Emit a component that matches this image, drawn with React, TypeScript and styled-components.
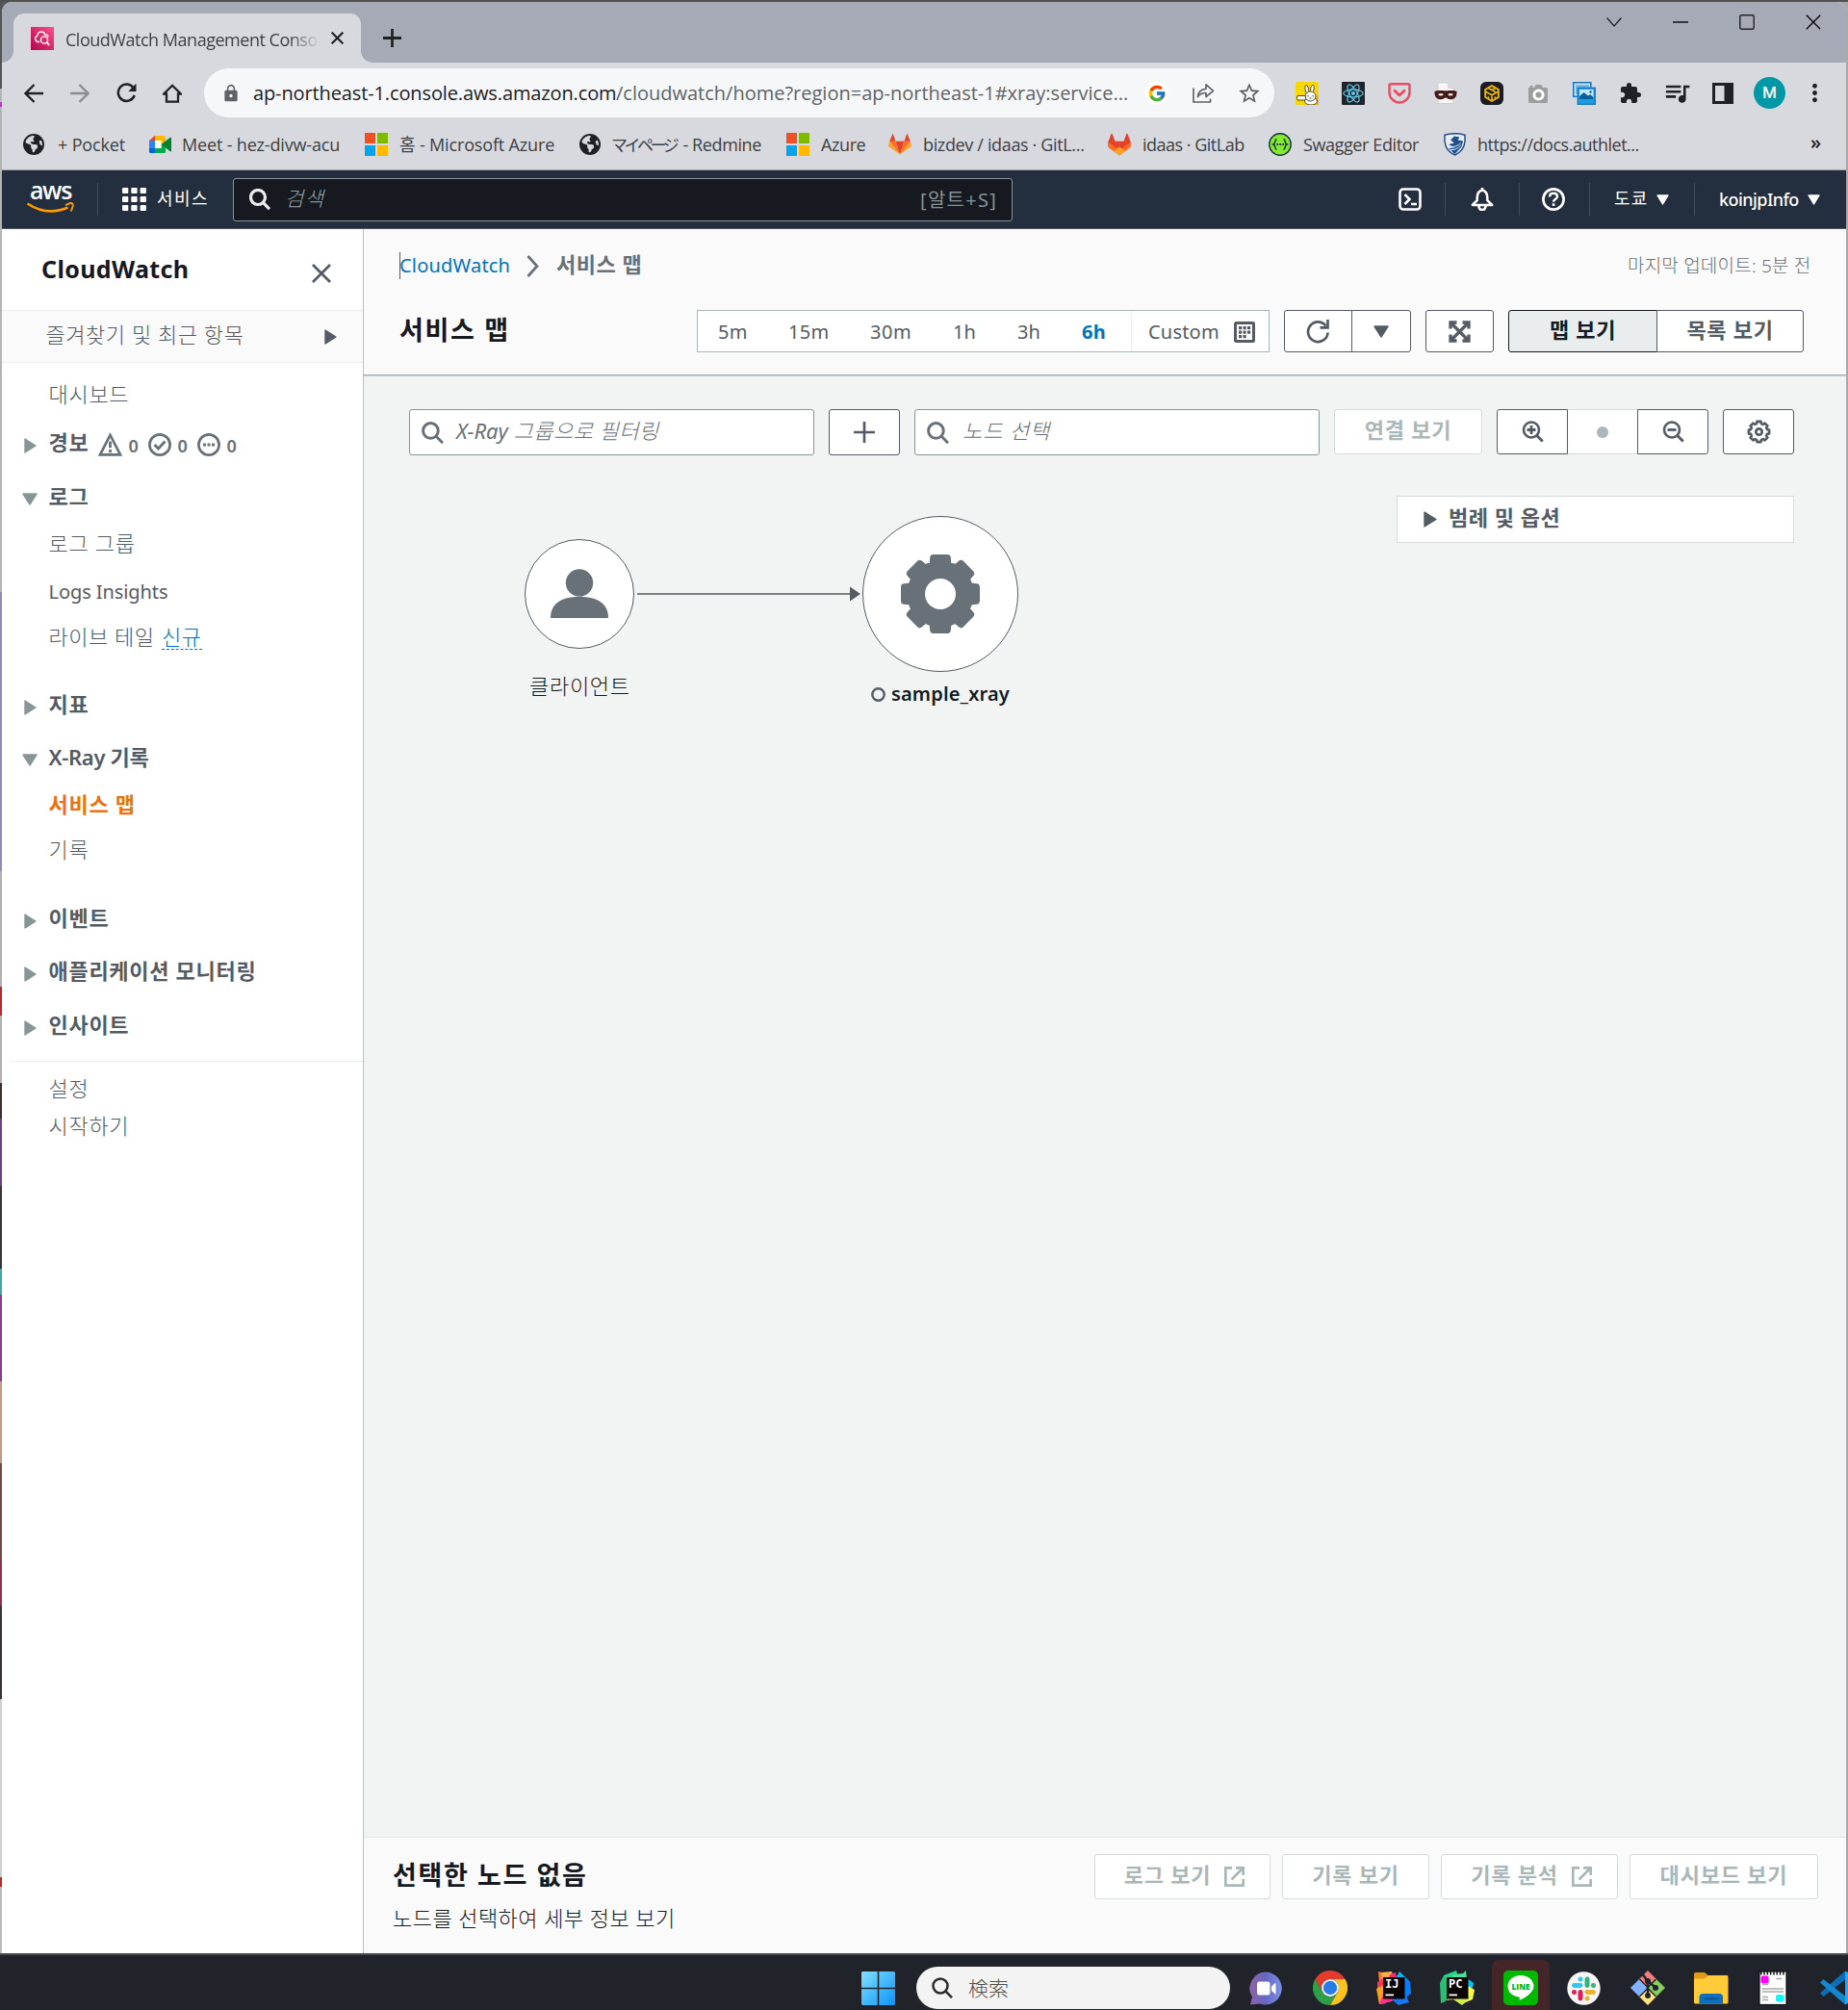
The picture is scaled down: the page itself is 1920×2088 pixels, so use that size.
import React from "react";
import styled, { createGlobalStyle, css } from "styled-components";
import { FcGoogle } from "react-icons/fc";
import { MdExtension, MdLock, MdMoreVert, MdQueueMusic, MdStarBorder } from "react-icons/md";
import { FaEarthAmericas } from "react-icons/fa6";

const GlobalStyle = createGlobalStyle`
  * { box-sizing: border-box; }
  body {
    margin: 0;
    width: 1920px;
    height: 2088px;
    overflow: hidden;
    background: #202329;
    font-family: "Noto Sans", "Noto Sans CJK KR", sans-serif;
  }
  svg { display: block; flex: none; }
`;

/* ---------- text ---------- */

interface TextProps {
  $w?: number;
  $s?: number;
  $c?: string;
  $b?: number;
  $ls?: number;
  $ml?: number;
  $mt?: number;
  $italic?: boolean;
  $ui?: boolean;
}

const Text = styled.span<TextProps>`
  flex: none;
  white-space: pre;
  line-height: 28px;
  width: ${(p) => (p.$w ? `${p.$w}px` : "auto")};
  font-size: ${(p) => p.$s ?? 22}px;
  font-weight: ${(p) => p.$b ?? 400};
  font-style: ${(p) => (p.$italic ? "italic" : "normal")};
  letter-spacing: ${(p) => p.$ls ?? 0}px;
  color: ${(p) => p.$c ?? "#545b64"};
  margin-left: ${(p) => p.$ml ?? 0}px;
  margin-top: ${(p) => p.$mt ?? 0}px;
  ${(p) =>
    p.$ui &&
    css`
      font-family: "Open Sans", "Noto Sans CJK KR", "Noto Sans CJK JP", sans-serif;
    `}
`;

const Kana = styled.span`
  font-size: 17px;
  letter-spacing: -3.5px;
  margin-right: 3px;
`;

const Latin = styled.span`
  font-weight: 400;
  letter-spacing: 0;
`;

const Slot = styled.span<{ $ml?: number; $mt?: number; $c?: string; $w?: number }>`
  display: flex;
  flex: none;
  justify-content: center;
  width: ${(p) => (p.$w ? `${p.$w}px` : "auto")};
  margin-left: ${(p) => p.$ml ?? 0}px;
  margin-top: ${(p) => p.$mt ?? 0}px;
  color: ${(p) => p.$c ?? "#202124"};
`;

/* ---------- window frame ---------- */

const Desktop = styled.div`
  width: 1920px;
  height: 2088px;
  display: flex;
  flex-direction: column;
`;

const Frame = styled.div`
  height: 2029px;
  padding: 2px 2px 0 2px;
  background:
    linear-gradient(#505050, #505050) top / 100% 2px no-repeat,
    linear-gradient(#a9a9ab, #a9a9ab) right / 12px 100% no-repeat,
    linear-gradient(
      #555 0 92px, #b5b5b5 92px 106px, #b63cc8 106px 111px, #b4b4b4 111px 615px,
      #8f8cb8 615px 905px, #b0b0b0 905px 1025px, #b8282f 1025px 1055px, #b5b0b0 1055px 1125px,
      #3c302e 1125px 1162px, #6d4480 1162px 1232px, #3a3536 1232px 1318px, #3fa7a3 1318px 1345px,
      #8a3c8c 1345px 1435px, #c09a83 1435px 1520px, #6f4c48 1520px 1620px, #8e3350 1620px 1668px,
      #3a3436 1668px 1765px, #cfcfcf 1765px 1950px, #b8282f 1950px 1960px, #bbb 1960px 2029px
    );
`;

const Window = styled.div`
  height: 2027px;
  display: flex;
  flex-direction: column;
  border-radius: 10px 10px 0 0;
  overflow: hidden;
  background: #d8d9df;
`;

const TabStrip = styled.div`
  height: 63px;
  flex: none;
  display: flex;
  padding: 12px 0 0 0;
  background: #a6aab6;
`;

const TabFoot = styled.span<{ $right?: boolean }>`
  width: 12px;
  height: 12px;
  align-self: flex-end;
  background: radial-gradient(circle at ${(p) => (p.$right ? "100%" : "0")} 0, #a6aab6 11.5px, #d8d9df 12.2px);
`;

const Tab = styled.div`
  width: 361px;
  display: flex;
  align-items: center;
  padding-left: 18px;
  background: #d8d9df;
  border-radius: 11px 11px 0 0;
`;

const TabTitle = styled(Text)`
  overflow: hidden;
  mask-image: linear-gradient(90deg, #000 88%, transparent);
`;

const WindowButtons = styled.div`
  margin-left: auto;
  padding: 0 26px 0 0;
  height: 18px;
  display: flex;
  align-items: center;
  gap: 53px;
`;

const Toolbar = styled.div`
  height: 63px;
  flex: none;
  display: flex;
  align-items: center;
  padding-left: 23px;
`;

const AddressBar = styled.div`
  width: 1112px;
  height: 51px;
  margin-left: 23px;
  padding-left: 21px;
  display: flex;
  align-items: center;
  border-radius: 26px;
  background: #f5f7f9;
`;

const Badge = styled.span`
  width: 24px;
  height: 24px;
  margin-left: 19px;
  display: flex;
  align-items: center;
  justify-content: center;
  border-radius: 50%;
  background: #fff;
`;

const Extensions = styled.div`
  display: flex;
  align-items: center;
  gap: 24px;
  margin-left: 22px;
`;

const Avatar = styled.span`
  width: 33px;
  height: 33px;
  margin-left: 20px;
  border-radius: 50%;
  background: #0097a7;
  color: #fff;
  font: 500 17px/33px Roboto, sans-serif;
  text-align: center;
`;

const Bookmarks = styled.div`
  height: 49px;
  flex: none;
  display: flex;
  align-items: center;
  padding: 0 0 5px 22px;
  border-bottom: 1px solid #a3a4a8;
`;

/* ---------- AWS navigation ---------- */

const AwsNav = styled.nav`
  height: 61px;
  flex: none;
  display: flex;
  align-items: center;
  padding-left: 25px;
  background: #232f3e;
  border-bottom: 1px solid #4c5561;
`;

const AwsLogo = styled.div`
  width: 50px;
  height: 34px;
  display: flex;
  flex-direction: column;
  align-items: center;
`;

const AwsWord = styled.span`
  height: 20px;
  margin-left: 1px;
  font: 600 25px/14px "Open Sans", sans-serif;
  letter-spacing: -1.3px;
  color: #fff;
`;

const Divider = styled.span<{ $ml: number }>`
  width: 1px;
  height: 34px;
  flex: none;
  margin-left: ${(p) => p.$ml}px;
  background: #414d5c;
`;

const GlobalSearch = styled.div`
  width: 810px;
  height: 45px;
  margin-left: 25px;
  padding-left: 16px;
  display: flex;
  align-items: center;
  border: 1px solid #879596;
  border-radius: 3px;
  background: #16191f;
`;

/* ---------- page body ---------- */

const Body = styled.div`
  flex: 1;
  min-height: 0;
  display: flex;
`;

const Sidebar = styled.aside`
  width: 376px;
  flex: none;
  background: #fff;
  border-right: 1px solid #b7c1c1;
`;

const SideHeader = styled.div`
  height: 84px;
  display: flex;
  align-items: center;
  padding-left: 41px;
`;

const Favorites = styled.div`
  height: 55px;
  display: flex;
  align-items: center;
  padding-left: 45px;
  background: #fafafa;
  border: solid #eaeded;
  border-width: 1px 0;
`;

const SideRow = styled.div<{ $gap: number }>`
  height: 40px;
  margin-top: ${(p) => p.$gap}px;
  padding-left: 20px;
  display: flex;
  align-items: center;
`;

const Twisty = styled.span`
  width: 28px;
  flex: none;
  display: flex;
  align-items: center;
  padding-top: 3px;
`;

const NewTag = styled(Text)`
  border-bottom: 1px dashed #0073bb;
  line-height: 26px;
`;

const SideRule = styled.hr`
  height: 1px;
  margin: 16px 0 0 8px;
  border: 0;
  background: #eaeded;
`;

const Main = styled.main`
  flex: 1;
  display: flex;
  flex-direction: column;
  background: #f2f4f3;
`;

const PageHeader = styled.header`
  height: 153px;
  flex: none;
  background: #fafafa;
  border-bottom: 1px solid #c9d0d1;
  box-shadow: inset 0 -1px 0 #a6b0b2;
`;

const Crumbs = styled.div`
  height: 40px;
  margin-top: 17px;
  padding-left: 37px;
  display: flex;
  align-items: center;
`;

const CrumbLink = styled(Text)`
  border-left: 1px solid #0073bb;
  text-indent: -1px;
`;

const TitleRow = styled.div`
  height: 44px;
  margin-top: 27px;
  padding-left: 37px;
  display: flex;
  align-items: center;
`;

const Ranges = styled.div`
  width: 595px;
  height: 44px;
  margin-left: 195px;
  padding: 2px 0 0 21px;
  display: flex;
  align-items: center;
  background: #fff;
  border: 1px solid #aab7b8;
`;

const RangeDivider = styled.span`
  width: 1px;
  height: 42px;
  margin: -2px 0 0 25px;
  background: #eaeded;
`;

type Tone = "normal" | "active" | "disabled";

const tones: Record<Tone, string> = {
  normal: "#545b64",
  active: "#16191f",
  disabled: "#d5dbdb",
};

const Button = styled.button<{ $w: number; $h?: number; $ml?: number; $tone?: Tone; $r?: string }>`
  width: ${(p) => p.$w}px;
  height: ${(p) => p.$h ?? 44}px;
  flex: none;
  margin: 0 0 0 ${(p) => p.$ml ?? 0}px;
  padding: 0;
  display: flex;
  align-items: center;
  justify-content: center;
  font-family: inherit;
  color: #545b64;
  background: ${(p) => (p.$tone === "active" ? "#eaeded" : "#fff")};
  border: 1px solid ${(p) => tones[p.$tone ?? "normal"]};
  border-radius: ${(p) => p.$r ?? "3px"};
`;

const DotCell = styled.span`
  width: 72px;
  height: 47px;
  display: flex;
  align-items: center;
  justify-content: center;
  background: #fff;
  border: solid #d5dbdb;
  border-width: 1px 0;
`;

const Canvas = styled.section`
  position: relative;
  height: 1517px;
  flex: none;
`;

const MapTools = styled.div`
  display: flex;
  padding: 34px 0 0 47px;
`;

const Field = styled.div<{ $ml?: number }>`
  width: 421px;
  height: 48px;
  flex: none;
  margin-left: ${(p) => p.$ml ?? 0}px;
  padding-left: 12px;
  display: flex;
  align-items: center;
  background: #fff;
  border: 1px solid #879596;
  border-radius: 3px;
`;

const Legend = styled.div`
  width: 413px;
  height: 49px;
  margin: 42px 0 0 1073px;
  padding-left: 27px;
  display: flex;
  align-items: center;
  background: #fff;
  border: 1px solid #d5dbdb;
`;

const MapNode = styled.div<{ $x: number; $y: number; $d: number }>`
  position: absolute;
  left: ${(p) => p.$x - p.$d / 2}px;
  top: ${(p) => p.$y - p.$d / 2}px;
  width: ${(p) => p.$d}px;
  height: ${(p) => p.$d}px;
  display: flex;
  align-items: center;
  justify-content: center;
  border: 1px solid #545b64;
  border-radius: 50%;
  background: #fff;
`;

const MapEdge = styled.svg`
  position: absolute;
  left: 284px;
  top: 218px;
`;

const NodeLabel = styled.div<{ $x: number; $y: number }>`
  position: absolute;
  left: ${(p) => p.$x}px;
  top: ${(p) => p.$y}px;
  display: flex;
  align-items: center;
`;

const DetailPanel = styled.section`
  flex: 1;
  display: flex;
  justify-content: space-between;
  padding: 17px 29px 0 30px;
  background: #fafafa;
  border-top: 1px solid #e3e8e8;
`;

const DetailText = styled.div`
  display: flex;
  flex-direction: column;
`;

const DetailActions = styled.div`
  display: flex;
  gap: 12px;
`;

/* ---------- taskbar ---------- */

const Taskbar = styled.footer`
  height: 59px;
  flex: none;
  display: flex;
  align-items: center;
  padding: 11px 0 0 895px;
  overflow: hidden;
  background: #202329;
  border-top: 2px solid #494c4e;
`;

const TaskSearch = styled.div`
  width: 326px;
  height: 44px;
  flex: none;
  margin-left: 22px;
  padding-left: 16px;
  display: flex;
  align-items: center;
  border-radius: 22px;
  background: #f3f3f3;
`;

const LineCell = styled.span`
  width: 60px;
  height: 64px;
  flex: none;
  margin: 6px 0 0 18px;
  display: flex;
  justify-content: center;
  padding-top: 11px;
  border-radius: 7px;
  background: #452628;
`;

/* ---------- icons ---------- */

const stroke = (w: number, c = "currentColor") => ({
  fill: "none",
  stroke: c,
  strokeWidth: w,
});

const CloudWatchIcon = () => (
  <svg width="24" height="24" viewBox="0 0 24 24">
    <defs>
      <linearGradient id="cw" x1="0" y1="1" x2="1" y2="0">
        <stop offset="0" stopColor="#b0084d" />
        <stop offset="1" stopColor="#ff4f8b" />
      </linearGradient>
    </defs>
    <rect width="24" height="24" fill="url(#cw)" />
    <path d="M9 15.500H7.500A3.300 3.300 0 0 1 6.800 9.200C6.900 6.500 9 5 11 5c2 0 3.300 1.200 3.900 3 1.600-.3 3 .5 3.100 2.500" {...stroke(1.3, "#fff")} />
    <circle cx="14" cy="13.500" r="3.600" {...stroke(1.4, "#fff")} />
    <path d="m16.600 16.200 2.600 2.800" {...stroke(1.8, "#fff")} />
  </svg>
);

const Cross = ({ size, w }: { size: number; w: number }) => (
  <svg width={size} height={size} viewBox="0 0 20 20">
    <path d="M1 1 19 19M19 1 1 19" {...stroke(w)} />
  </svg>
);

const Plus = ({ size, w }: { size: number; w: number }) => (
  <svg width={size} height={size} viewBox="0 0 20 20">
    <path d="M10 0V20M0 10H20" {...stroke(w)} />
  </svg>
);

const ArrowLeft = ({ flip }: { flip?: boolean }) => (
  <svg width="20" height="20" viewBox="0 0 20 20" transform={flip ? "scale(-1 1)" : undefined}>
    <path d="M20 10H2M10.500 1 1.500 10l9 9" {...stroke(2.300)} />
  </svg>
);

const ReloadIcon = () => (
  <svg width="21" height="21" viewBox="0 0 21 21">
    <path d="M17.800 5.500A8.700 8.700 0 1 0 18.700 13" {...stroke(2.500)} />
    <path d="M20.500.8V9H12.300z" fill="currentColor" />
  </svg>
);

const HomeIcon = () => (
  <svg width="20" height="20" viewBox="0 0 20 20">
    <path d="M1.200 10.500 10 1.800l8.800 8.700H16V18.700H4V10.500z" {...stroke(2.300)} />
  </svg>
);

const ShareIcon = () => (
  <svg width="23" height="21" viewBox="0 0 23 21">
    <path d="M1 5.500V20H18.500V16.500" {...stroke(1.700)} />
    <path d="M5.500 14.500C6 9.500 9 6.500 14 6.300V1.800L21.500 8.300 14 14.500V10.500C10 10.500 7.500 11.500 5.500 14.500z" {...stroke(1.700)} strokeLinejoin="round" />
  </svg>
);

const BunnyIcon = () => (
  <svg width="24" height="24" viewBox="0 0 24 24">
    <rect width="24" height="24" rx="1.500" fill="#f6d800" />
    <path d="M12 24h12V13z" fill="#f5b400" />
    <g fill="#fff" stroke="#4c4427" strokeWidth="1">
      <path d="M11.500 12C9.500 8 9.500 4 11 3.500c1.800-.3 2.700 4 2.800 7.500zM15.500 11c0-4 .8-8 2.700-7.500 1.800.5 1 5-.5 8.500z" />
      <ellipse cx="16" cy="20" rx="6.500" ry="4" />
      <ellipse cx="15.500" cy="15" rx="5.500" ry="5" />
      <rect x="1.500" y="14.500" width="9" height="4.500" rx="1.500" />
    </g>
    <path d="M13 14v1.500M18 14v1.500M14.500 17h2" {...stroke(1, "#333")} />
  </svg>
);

const ReactIcon = () => (
  <svg width="24" height="24" viewBox="0 0 24 24">
    <rect width="24" height="24" rx="1" fill="#20232a" />
    <g {...stroke(1.200, "#61c9ea")}>
      {[0, 60, 120].map((a) => (
        <ellipse key={a} cx="12" cy="12" rx="10.200" ry="3.900" transform={`rotate(${a} 12 12)`} />
      ))}
    </g>
    <circle cx="12" cy="12" r="2" fill="#61c9ea" />
  </svg>
);

const PocketIcon = () => (
  <svg width="24" height="24" viewBox="0 0 24 24">
    <path d="M3 2.200H21A1.500 1.500 0 0 1 22.500 3.700V11A10.500 10.500 0 0 1 1.500 11V3.700A1.500 1.500 0 0 1 3 2.200z" {...stroke(2.400, "#ef4962")} />
    <path d="m7 9.200 5 4.800 5-4.800" {...stroke(2.700, "#ef4962")} strokeLinecap="round" strokeLinejoin="round" />
  </svg>
);

const MaskIcon = () => (
  <svg width="24" height="24" viewBox="0 0 24 24">
    <path d="M4 1h10l6 6v15.500H4z" fill="#f7f7f7" stroke="#c9c9c9" strokeWidth=".8" />
    <path d="M14 1v6h6z" fill="#d9d9d9" />
    <path d="M.5 10c3-1.500 6-.8 11.500-.8S20.500 8.500 23.500 10c.5 6-3 8.500-6.500 8.300-2.500 0-3.500-1.800-5-1.800s-2.500 1.800-5 1.800C3.500 18.500 0 16 .5 10z" fill="#43191a" />
    <ellipse cx="7" cy="13.300" rx="2.700" ry="1.300" fill="#e8e2e2" />
    <ellipse cx="17" cy="13.300" rx="2.700" ry="1.300" fill="#e8e2e2" />
  </svg>
);

const HiveIcon = () => (
  <svg width="24" height="24" viewBox="0 0 24 24">
    <rect width="24" height="24" rx="6" fill="#1b1d22" />
    <path d="M12 4 18.800 8V16L12 20 5.200 16V8z" {...stroke(1.900, "#f0b90b")} />
    <path d="M5.500 10.200 12 13.800 18.500 10.200M12 13.800V20M8.300 6.500 15.700 10.500M15.700 6.500 12 8.500M8.500 15.200v2.500M15.500 15.200v2.500" {...stroke(1.600, "#f0b90b")} />
  </svg>
);

const CameraIcon = () => (
  <svg width="24" height="24" viewBox="0 0 24 24">
    <path d="M3.500 4h3v2H8L9.500 3h6L17 6h3.500A1.500 1.500 0 0 1 22 7.500v13A1.500 1.500 0 0 1 20.500 22h-17A1.500 1.500 0 0 1 2 20.500V6h1.500z" fill="#9d9d9d" />
    <circle cx="12.500" cy="13.500" r="4.600" fill="#9d9d9d" stroke="#fff" strokeWidth="3" />
  </svg>
);

const PhotosIcon = () => (
  <svg width="24" height="24" viewBox="0 0 24 24">
    <rect x=".8" y=".8" width="18" height="14.500" fill="#d7ecfa" stroke="#2277b8" strokeWidth="1.600" />
    <rect x="3" y="3" width="14" height="10" fill="#6fb9e8" />
    <rect x="5.300" y="6.300" width="18" height="17" fill="#1f9be0" stroke="#1a7cc4" strokeWidth="1.400" />
    <rect x="7" y="8" width="14.500" height="10" fill="#c7e8fb" />
    <path d="M7 18v-3l4.500-4 4.500 3.500 2-1.500 3.500 3V18z" fill="#0e5f9e" />
    <circle cx="18.500" cy="10.500" r="1.200" fill="#0e5f9e" />
  </svg>
);

const PanelIcon = () => (
  <svg width="22" height="22" viewBox="0 0 22 22">
    <rect x="1.500" y="1.500" width="19" height="19" {...stroke(3)} />
    <rect x="12.500" y="1" width="9" height="20" fill="currentColor" />
  </svg>
);

const MeetIcon = () => (
  <svg width="24" height="20" viewBox="0 0 24 20">
    <path d="M6 1H15.500A1.500 1.500 0 0 1 17 2.500V10H12.500V6H6z" fill="#ffba00" />
    <path d="M0 6 6 .8V6z" fill="#ea4335" />
    <path d="M0 6H6V14H0z" fill="#2684fc" />
    <path d="M0 14H6V19H1.500A1.500 1.500 0 0 1 0 17.500z" fill="#0066da" />
    <path d="M6 14H12.500V10H17V17.500A1.500 1.500 0 0 1 15.500 19H6z" fill="#00ac47" />
    <path d="M12.500 10 21.500 3Q23 2 23 3.500V16.500Q23 18 21.500 17z" fill="#00832d" />
    <path d="M6 6H12.500V14H6z" fill="#fff" />
  </svg>
);

const MicrosoftIcon = () => (
  <svg width="24" height="24" viewBox="0 0 24 24">
    <path fill="#f25022" d="M0 0h11v11H0z" />
    <path fill="#7fba00" d="M13 0h11v11H13z" />
    <path fill="#00a4ef" d="M0 13h11v11H0z" />
    <path fill="#ffb900" d="M13 13h11v11H13z" />
  </svg>
);

const GitLabIcon = ({ solid }: { solid?: boolean }) =>
  solid ? (
    <svg width="24" height="24" viewBox="0 0 24 24">
      <path d="M12 23.500 1.500 15.500A5.500 5.500 0 0 1 .3 9.500L3.500 1Q4 .3 4.600 1L7.500 8.800h9L19.400 1Q20 .3 20.500 1l3.200 8.500a5.500 5.500 0 0 1-1.200 6z" fill="#e24329" />
      <path d="M12 18.500 23.700 9.600Q25 13.500 22.500 15.700L18 19z" fill="#fc6d26" />
      <path d="M12 18.500.3 9.600Q-1 13.500 1.500 15.700L6 19z" fill="#fc6d26" />
      <path d="m12 14.500 6 4.500-6 4.500L6 19z" fill="#fca326" />
    </svg>
  ) : (
    <svg width="24" height="23" viewBox="0 0 24 23">
      <path d="M12 22.500 16.500 8.800h-9z" fill="#e24329" />
      <path d="M12 22.500 7.500 8.800H1.200zM12 22.500l4.500-13.700h6.300z" fill="#fc6d26" />
      <path d="M1.200 8.800 0 13.200q0 .6.400 1L12 22.500zM22.800 8.800 24 13.200q0 .6-.4 1L12 22.500z" fill="#fca326" />
      <path d="M1.200 8.800H7.500L4.700.5zM22.800 8.800H16.500L19.300.5z" fill="#e24329" />
    </svg>
  );

const SwaggerIcon = () => (
  <svg width="24" height="24" viewBox="0 0 24 24">
    <circle cx="12" cy="12" r="11.200" fill="#85ea2d" stroke="#173647" strokeWidth="1.400" />
    <path d="M8.500 6.500C6 6.500 7.800 11 5 12c2.800 1 1 5.500 3.500 5.500M15.500 6.500c2.500 0 .7 4.500 3.500 5.500-2.800 1-1 5.500-3.500 5.500" {...stroke(1.600, "#173647")} />
    <path d="M8.500 12H16" {...stroke(1.800, "#173647")} strokeDasharray="1.700 1.200" />
  </svg>
);

const ShieldIcon = () => (
  <svg width="23" height="24" viewBox="0 0 23 24">
    <path d="M1 2.200Q12-.8 22 2.200V9Q21 19 11.500 23 2 19 1 9z" fill="#e9eef5" stroke="#1f4f8f" strokeWidth="1.500" />
    <path d="M7 7.500 11 3.500 16.500 4.500l-2 3 5.500 1L18.500 14.500l-7 7.500-6.500-6 6.500-.5-6.500-3.500L11 10.500z" fill="#1f4f8f" />
    <path d="M7 17.500q6 1 11-5M6.500 14.500q7 .5 11-4" {...stroke(1, "#e9eef5")} />
  </svg>
);

const Search = ({ size, w }: { size: number; w: number }) => (
  <svg width={size} height={size} viewBox="0 0 22 22">
    <circle cx="9" cy="9" r="7.500" {...stroke(w)} />
    <path d="m14.300 14.300 6.700 6.900" {...stroke(w)} />
  </svg>
);

const Zoom = ({ plus }: { plus?: boolean }) => (
  <svg width="23" height="23" viewBox="0 0 23 23">
    <circle cx="10" cy="9.500" r="8" {...stroke(2.600)} />
    <path d={plus ? "M5.500 9.500h9M10 5v9" : "M5.500 9.500h9"} {...stroke(2.800)} />
    <path d="m15.700 15.500 6 6" {...stroke(2.900)} />
  </svg>
);

const AppGrid = () => (
  <svg width="25" height="24" viewBox="0 0 25 24" fill="#fff">
    {[0, 9, 18].map((y) => [0, 9.300, 18.600].map((x) => <rect key={`${x}-${y}`} x={x} y={y} width="6.300" height="6" rx="1" />))}
  </svg>
);

const Smile = () => (
  <svg width="50" height="12" viewBox="0 0 50 12">
    <path d="M1.500 1.500Q22 15 43.500 5.500" {...stroke(2.600, "#f90")} />
    <path d="M41 3.300Q47-.3 48.500 1.800 49.500 4.500 46.500 9.500" {...stroke(1.900, "#f90")} />
  </svg>
);

const Terminal = () => (
  <svg width="24" height="24" viewBox="0 0 24 24">
    <rect x="1.500" y="1.500" width="21" height="21" rx="3.500" {...stroke(2.600, "#fff")} />
    <path d="m6.500 7 5 5-5 5M13 17h6" {...stroke(2.600, "#fff")} />
  </svg>
);

const Bell = () => (
  <svg width="24" height="24" viewBox="0 0 24 24">
    <path d="M12 2.500c-3.800 1-5.300 4-5.300 8v2.700L1.800 18H22.200l-4.900-4.800V10.500c0-4-1.500-7-5.300-8z" {...stroke(2.500, "#fff")} strokeLinejoin="round" />
    <path d="M12 0v3M8.500 18.500v1a3.500 3.500 0 0 0 7 0v-1" {...stroke(2.600, "#fff")} />
  </svg>
);

const Help = () => (
  <svg width="24" height="24" viewBox="0 0 24 24">
    <circle cx="12" cy="12" r="10.600" {...stroke(2.700, "#fff")} />
    <path d="M8 9.500C8 6.800 9.800 5.800 12 5.800s4 1.200 4 3.400c0 2.600-4 2.600-4 5.600" {...stroke(2.500, "#fff")} />
    <path d="M10.700 16.300h2.700v2.700h-2.700z" fill="#fff" />
  </svg>
);

const Triangle = ({ dir, w, h }: { dir: "right" | "down"; w: number; h: number }) => (
  <svg width={w} height={h} viewBox={`0 0 ${w} ${h}`}>
    <path
      d={dir === "right" ? `M1 1V${h - 1}L${w - 1} ${h / 2}z` : `M1 1H${w - 1}L${w / 2} ${h - 1}z`}
      fill="currentColor"
      stroke="currentColor"
      strokeWidth="1.400"
      strokeLinejoin="round"
    />
  </svg>
);

const Warning = () => (
  <svg width="25" height="25" viewBox="0 0 25 25">
    <path d="M12.500 3 23 23.300H2z" {...stroke(2.700, "#687078")} />
    <path d="M12.500 9.500v6.700M12.500 18v3.300" {...stroke(2.800, "#687078")} />
  </svg>
);

const RoundState = ({ kind }: { kind: "ok" | "pending" }) => (
  <svg width="24" height="24" viewBox="0 0 24 24">
    <circle cx="12" cy="12" r="10.600" {...stroke(2.700, "#687078")} />
    {kind === "ok" ? (
      <path d="m6.500 12 4 4 7-7.500" {...stroke(2.900, "#687078")} />
    ) : (
      <path d="M6 12h12" {...stroke(3, "#687078")} strokeDasharray="3 1.500" />
    )}
  </svg>
);

const Chevron = () => (
  <svg width="13" height="23" viewBox="0 0 13 23">
    <path d="m1.500 1 9.500 10.500-9.500 10.500" {...stroke(2.700, "#687078")} />
  </svg>
);

const Calendar = () => (
  <svg width="22" height="22" viewBox="0 0 22 22">
    <rect x="1.500" y="1.500" width="19" height="19" rx="1" {...stroke(3)} />
    {[5, 9.500, 14].map((y) => [5, 9.500, 14].map((x) => (y === 14 && x > 13 ? null : <rect key={`${x}-${y}`} x={x} y={y} width="3.200" height="3.200" fill="currentColor" />)))}
  </svg>
);

const Refresh = () => (
  <svg width="25" height="25" viewBox="0 0 25 25">
    <path d="M20.500 6.500A10.300 10.300 0 1 0 22.600 13.500" {...stroke(2.700)} />
    <path d="M22.500 0V8.300H14.500" {...stroke(2.700)} />
  </svg>
);

const Expand = () => (
  <svg width="23" height="23" viewBox="0 0 23 23">
    <path d="M2 8.500V2H8.500M14.500 2H21V8.500M21 14.500V21H14.500M8.500 21H2V14.500M2 2 21 21M21 2 2 21" {...stroke(3.300)} />
  </svg>
);

const gearPath = (tip: number, root: number, tipHalf: number, rootHalf: number) => {
  const pts: string[] = [];
  for (let i = 0; i < 8; i++) {
    const base = i * 45;
    for (const [r, a] of [[root, -rootHalf], [tip, -tipHalf], [tip, tipHalf], [root, rootHalf]]) {
      const t = ((base + a) * Math.PI) / 180;
      pts.push(`${(r * Math.sin(t)).toFixed(2)} ${(-r * Math.cos(t)).toFixed(2)}`);
    }
  }
  return `M${pts.join("L")}z`;
};

const SmallGear = () => (
  <svg width="25" height="25" viewBox="-12.500 -12.500 25 25">
    <path d={gearPath(10.800, 8.700, 11, 16)} {...stroke(2.600)} strokeLinejoin="round" />
    <circle r="3.200" {...stroke(2.700)} />
  </svg>
);

const ServiceGear = () => (
  <svg width="86" height="86" viewBox="-43 -43 86 86">
    <path d={gearPath(38.200, 31.500, 11, 14.500)} fill="#687078" stroke="#687078" strokeWidth="7" strokeLinejoin="round" />
    <circle r="16" fill="#fff" />
  </svg>
);

const Person = () => (
  <svg width="60" height="52" viewBox="0 0 60 52" fill="#687078">
    <circle cx="30" cy="14.500" r="14.200" />
    <path d="M0 51C0 36 11 29 30 29s30 7 30 22z" />
  </svg>
);

const External = () => (
  <svg width="23" height="23" viewBox="0 0 23 23">
    <path d="M9 2.300H2.300V20.700H20.700V14" {...stroke(2.700, "#aab7b8")} />
    <path d="M13 2.300H20.700V10M20.500 2.500 8.500 14.500" {...stroke(2.700, "#aab7b8")} />
  </svg>
);

const WindowsIcon = () => (
  <svg width="35" height="35" viewBox="0 0 35 35">
    <defs>
      <linearGradient id="win" x1="0" y1="0" x2="1" y2="1">
        <stop offset="0" stopColor="#82e0ff" />
        <stop offset="1" stopColor="#0a93f8" />
      </linearGradient>
    </defs>
    <path fill="url(#win)" d="M1 0H16.700V16.700H0V1zM18.300 0H34l1 1V16.700H18.300zM0 18.300H16.700V35H1L0 34zM18.300 18.300H35V34l-1 1H18.300z" />
  </svg>
);

const ChatIcon = () => (
  <svg width="35" height="35" viewBox="0 0 35 35">
    <defs>
      <linearGradient id="chat" x1="0" y1="0" x2="1" y2="0">
        <stop offset="0" stopColor="#8d62a8" />
        <stop offset=".5" stopColor="#6668c4" />
        <stop offset="1" stopColor="#7a92e6" />
      </linearGradient>
    </defs>
    <path d="M17.500.5A17 17 0 1 1 11 33.500L1 34.500 3 26.500A17 17 0 0 1 17.500.5z" fill="url(#chat)" />
    <rect x="8" y="10.500" width="13.500" height="14" rx="2.500" fill="#fff" />
    <path d="m23 15.500 4.500-4v12.500L23 20z" fill="#fff" />
  </svg>
);

const ChromeIcon = () => (
  <svg width="36" height="36" viewBox="0 0 24 24">
    <path d="M12 6H22.400A12 12 0 0 0 1.600 6L6.800 15A6 6 0 0 1 12 6z" fill="#e33b2e" />
    <path d="M6.800 15 1.600 6A12 12 0 0 0 12 24L17.200 15A6 6 0 0 1 6.800 15z" fill="#2f9e48" />
    <path d="M17.200 15 12 24A12 12 0 0 0 22.400 6H12A6 6 0 0 1 17.200 15z" fill="#fcc31e" />
    <circle cx="12" cy="12" r="6" fill="#fff" />
    <circle cx="12" cy="12" r="4.800" fill="#2a7bea" />
  </svg>
);

const JetBrainsIcon = ({ label, shards }: { label: string; shards: [string, string][] }) => (
  <svg width="36" height="36" viewBox="0 0 36 36">
    {shards.map(([d, c]) => (
      <path key={d} d={d} fill={c} />
    ))}
    <rect x="7" y="7" width="22.500" height="22.500" fill="#0b0507" />
    <text x="9" y="18" fill="#fff" fontFamily="DejaVu Sans Mono" fontWeight="700" fontSize="12">{label}</text>
    <rect x="9.500" y="24.500" width="8.500" height="1.800" fill="#fff" />
  </svg>
);

const LineIcon = () => (
  <svg width="36" height="36" viewBox="0 0 36 36">
    <rect width="36" height="36" rx="5" fill="#00b900" />
    <path d="M18 5C10.300 5 4.500 10 4.500 16.300S9.500 26.800 16 27.500c1.200.3.800 2 .6 3.500 4-1.800 14.900-7.500 14.900-14.700C31.500 10 25.700 5 18 5z" fill="#fff" />
    <text x="18" y="19.800" textAnchor="middle" fill="#00b900" fontFamily="Open Sans" fontWeight="800" fontSize="8.200">LINE</text>
  </svg>
);

const SlackIcon = () => (
  <svg width="35" height="35" viewBox="0 0 35 35">
    <circle cx="17.500" cy="17.500" r="17.200" fill="#f7f7f7" />
    <g fill="#36c5f0"><rect x="11.500" y="5.500" width="5" height="5" rx="2.300" /><rect x="5" y="12" width="11.500" height="5" rx="2.400" /></g>
    <g fill="#2eb67d"><rect x="18.500" y="5.500" width="5" height="11.500" rx="2.400" /><rect x="25" y="12" width="5" height="5" rx="2.300" /></g>
    <g fill="#ecb22e"><rect x="18.500" y="19" width="11.500" height="5" rx="2.400" /><rect x="18.500" y="25.500" width="5" height="5" rx="2.300" /></g>
    <g fill="#e01e5a"><rect x="5" y="19" width="5" height="5" rx="2.300" /><rect x="11.500" y="19" width="5" height="11.500" rx="2.400" /></g>
  </svg>
);

const GitIcon = () => (
  <svg width="36" height="36" viewBox="0 0 36 36">
    <path d="M18 0 27 9 18 18 9 9z" fill="#f27f7f" />
    <path d="M9 9 18 18 9 27 0 18z" fill="#83b2ff" />
    <path d="M27 9 36 18 27 27 18 18z" fill="#85cf5c" />
    <path d="M18 18 27 27 18 36 9 27z" fill="#ffe681" />
    <path d="M13 4.500 18 11V26M18 11 26 17.500" {...stroke(2.600, "#202329")} />
    <path d="M9.500 9 18 17.500 26.500 9M9.500 27 18 18.500 26.500 27" {...stroke(1.400, "#202329")} />
    <circle cx="18" cy="11" r="3" fill="#202329" />
    <circle cx="26" cy="18" r="3" fill="#202329" />
    <circle cx="18" cy="26" r="3" fill="#202329" />
  </svg>
);

const FolderIcon = () => (
  <svg width="37" height="34" viewBox="0 0 37 34">
    <path d="M1 2.500Q1 1 2.500 1H12L15.500 4H36V12H1z" fill="#e09b13" />
    <path d="M1 7.500H12L15.500 4H35Q36.500 4 36.500 5.500V32Q36.500 33.500 35 33.500H2.500Q1 33.500 1 32z" fill="#ffcb38" />
    <path d="M6.500 33.500V27Q6.500 23 10.500 23H27Q31 23 31 27V33.500z" fill="#0d6ebd" />
    <path d="M12 28.300H25.500" {...stroke(1.500, "#0a4a86")} />
  </svg>
);

const NotesIcon = () => (
  <svg width="30" height="36" viewBox="0 0 30 36">
    <rect x="1" y="1" width="28" height="34.500" fill="#fcfcfc" stroke="#111" strokeWidth="1.200" />
    <path d="M2 2.500H28" {...stroke(4, "#111")} strokeDasharray="1.500 1.800" />
    <rect x="2.500" y="5.500" width="8" height="8" rx="2" fill="#f0f" />
    <rect x="18" y="25" width="8" height="7.500" rx="2" fill="#0ff" />
    <path d="M18.500 8.500h5.500M4 14.700h6M4 19h22M4 22h22M4 27.500h6M4 30.500h6" {...stroke(1.300, "#aaa")} />
  </svg>
);

const CodeIcon = () => (
  <svg width="36" height="36" viewBox="0 0 36 36">
    <path d="M26 .5 35 4.800V31.200L26 35.500z" fill="#29a6ee" />
    <path d="M26 .5V9.500L3.500 27 0 23.500z" fill="#0d6fb8" />
    <path d="M26 35.500V26.500L3.500 9 0 12.500z" fill="#1487d0" />
  </svg>
);

const ideaShards: [string, string][] = [
  ["M2 1 15 4 10 14 3 12z", "#fe7a2c"],
  ["M5 2 16 1 18 8 8 12z", "#fcb04a"],
  ["M1 12 8 8 9 22 1 23z", "#fe315d"],
  ["M0 19 9 14 10 34 3 35z", "#f9a11b"],
  ["M14 4 20 2 22 16 12 12z", "#fd2c72"],
  ["M3 35 7 24 20 28 16 32z", "#ff318c"],
  ["M24 1 35 12 31 20 20 8z", "#10b3fb"],
  ["M29 8 35 12 36 24 28 30z", "#087cfa"],
  ["M16 30 29 22 34 33 23 36z", "#1478f2"],
];

const charmShards: [string, string][] = [
  ["M4 5 17 0 20 10 6 16z", "#21d789"],
  ["M0 13 4 5 12 14 6 32 1 34z", "#2bbd77"],
  ["M14 4 24 3 27 0 28 10 12 12z", "#4fe095"],
  ["M28 8 35 13 34 18 27 24z", "#07c3f2"],
  ["M29 16 36 20 34 30 22 35z", "#fcf84a"],
  ["M6 31 12 26 34 26 23 36 14 30z", "#d2ee4f"],
];

/* ---------- sections ---------- */

const BrowserChrome = () => (
  <>
    <TabStrip>
      <TabFoot />
      <Tab>
        <CloudWatchIcon />
        <TabTitle $ui $s={18} $w={264} $ls={-0.48} $ml={12} $mt={2} $c="#3c4043">CloudWatch Management Conso</TabTitle>
        <Slot $ml={12}><Cross size={13} w={3.300} /></Slot>
      </Tab>
      <TabFoot $right />
      <Slot $ml={11} $mt={16}><Plus size={19} w={2.900} /></Slot>
      <WindowButtons>
        <svg width="16" height="10" viewBox="0 0 16 10"><path d="m.5.500 7.500 8.500L15.500.5" {...stroke(1.200, "#222")} /></svg>
        <svg width="16" height="2" viewBox="0 0 16 2"><path d="M0 1H16" {...stroke(1.400, "#111")} /></svg>
        <svg width="16" height="16" viewBox="0 0 16 16"><rect x=".8" y=".8" width="14.400" height="14.400" rx="1.500" {...stroke(1.400, "#222")} /></svg>
        <Cross size={16} w={1.600} />
      </WindowButtons>
    </TabStrip>
    <Toolbar>
      <Slot><ArrowLeft /></Slot>
      <Slot $ml={28} $c="#8a8c92"><ArrowLeft flip /></Slot>
      <Slot $ml={28}><ReloadIcon /></Slot>
      <Slot $ml={27}><HomeIcon /></Slot>
      <AddressBar>
        <Slot $c="#5f6368" $w={13}><MdLock size={20} /></Slot>
        <Text $ui $s={20} $w={377} $ls={-0.12} $ml={17} $c="#202124">ap-northeast-1.console.aws.amazon.com</Text>
        <Text $ui $s={20} $w={531} $c="#5f6368">/cloudwatch/home?region=ap-northeast-1#xray:service...</Text>
        <Badge><FcGoogle size={20} /></Badge>
        <Slot $ml={25} $c="#5f6368"><ShareIcon /></Slot>
        <Slot $ml={23} $c="#5f6368"><MdStarBorder size={26} /></Slot>
      </AddressBar>
      <Extensions>
        <BunnyIcon />
        <ReactIcon />
        <PocketIcon />
        <MaskIcon />
        <HiveIcon />
        <CameraIcon />
        <PhotosIcon />
        <Slot $w={24}><MdExtension size={24} /></Slot>
        <Slot $w={24}><MdQueueMusic size={31} /></Slot>
        <Slot $w={24}><PanelIcon /></Slot>
      </Extensions>
      <Avatar>M</Avatar>
      <Slot $ml={16}><MdMoreVert size={29} /></Slot>
    </Toolbar>
    <Bookmarks>
      <FaEarthAmericas size={22} color="#202124" />
      <Text $ui $s={18} $w={70} $ls={-0.15} $ml={14} $mt={1} $c="#3c4043">+ Pocket</Text>
      <Slot $ml={25}><MeetIcon /></Slot>
      <Text $ui $s={18} $w={164} $ls={-0.17} $ml={10} $mt={1} $c="#3c4043">Meet - hez-divw-acu</Text>
      <Slot $ml={26}><MicrosoftIcon /></Slot>
      <Text $ui $s={18} $w={161} $ls={-0.16} $ml={12} $mt={1} $c="#3c4043">홈 - Microsoft Azure</Text>
      <Slot $ml={26}><FaEarthAmericas size={22} color="#202124" /></Slot>
      <Text $ui $s={18} $w={155} $ls={-0.400} $ml={11} $mt={1} $c="#3c4043"><Kana>マイページ</Kana> - Redmine</Text>
      <Slot $ml={27}><MicrosoftIcon /></Slot>
      <Text $ui $s={18} $w={46} $ls={-0.4} $ml={12} $mt={1} $c="#3c4043">Azure</Text>
      <Slot $ml={24}><GitLabIcon /></Slot>
      <Text $ui $s={18} $w={168} $ls={-0.35} $ml={12} $mt={1} $c="#3c4043">bizdev / idaas · GitL...</Text>
      <Slot $ml={24}><GitLabIcon solid /></Slot>
      <Text $ui $s={18} $w={106} $ls={-0.5} $ml={12} $mt={1} $c="#3c4043">idaas · GitLab</Text>
      <Slot $ml={25}><SwaggerIcon /></Slot>
      <Text $ui $s={18} $w={121} $ls={-0.4} $ml={12} $mt={1} $c="#3c4043">Swagger Editor</Text>
      <Slot $ml={25}><ShieldIcon /></Slot>
      <Text $ui $s={18} $w={168} $ls={-0.48} $ml={12} $mt={1} $c="#3c4043">https://docs.authlet...</Text>
      <Text $ui $s={20} $b={600} $ml={178} $mt={-4} $c="#202124">»</Text>
    </Bookmarks>
  </>
);

const NavBar = () => (
  <AwsNav>
    <AwsLogo>
      <AwsWord>aws</AwsWord>
      <Smile />
    </AwsLogo>
    <Divider $ml={24} />
    <Slot $ml={25}><AppGrid /></Slot>
    <Text $s={18} $w={54} $ls={1.500} $ml={11} $mt={-3} $c="#fff">서비스</Text>
    <GlobalSearch>
      <Slot $c="#eaeded"><Search size={22} w={3.200} /></Slot>
      <Text $s={21} $b={300} $w={41} $ls={1.500} $ml={15} $mt={-3} $italic $c="#95a5a6">검색</Text>
      <Text $s={20} $w={79} $ls={1.300} $ml={619} $mt={2} $c="#879596">[알트+S]</Text>
    </GlobalSearch>
    <Slot $ml={401}><Terminal /></Slot>
    <Divider $ml={24} />
    <Slot $ml={26}><Bell /></Slot>
    <Divider $ml={26} />
    <Slot $ml={23}><Help /></Slot>
    <Divider $ml={25} />
    <Text $s={18} $w={37} $ls={1.300} $ml={25} $mt={-2} $c="#fff">도쿄</Text>
    <Slot $ml={7} $c="#fff"><Triangle dir="down" w={13} h={11} /></Slot>
    <Divider $ml={26} />
    <Text $s={18} $b={500} $w={83} $ls={-0.550} $ml={25} $c="#fff">koinjpInfo</Text>
    <Slot $ml={9} $c="#fff"><Triangle dir="down" w={13} h={11} /></Slot>
  </AwsNav>
);

interface SectionProps {
  label: string;
  gap: number;
  open?: boolean;
  ls?: number;
  children?: React.ReactNode;
}

const Section = ({ label, gap, open, ls = 0.7, children }: SectionProps) => (
  <SideRow $gap={gap}>
    <Twisty>
      {open ? (
        <Slot $ml={1} $c="#879596"><Triangle dir="down" w={16} h={13} /></Slot>
      ) : (
        <Slot $ml={3} $c="#879596"><Triangle dir="right" w={13} h={16} /></Slot>
      )}
    </Twisty>
    <Text $s={22} $b={600} $ls={ls} $ml={0.5} $mt={-4}>{label}</Text>
    {children}
  </SideRow>
);

const SideLink = ({ label, gap, latin, active }: { label: string; gap: number; latin?: boolean; active?: boolean }) => (
  <SideRow $gap={gap}>
    <Text
      $s={latin ? 20 : 22}
      $b={active ? 600 : latin ? 400 : 300}
      $ls={latin ? -0.080 : 0.700}
      $ml={28.5}
      $mt={latin ? -2 : -4}
      $c={active ? "#ec7211" : undefined}
    >
      {label}
    </Text>
  </SideRow>
);

const Count = ({ icon, ml }: { icon: React.ReactNode; ml: number }) => (
  <>
    <Slot $ml={ml} $mt={1}>{icon}</Slot>
    <Text $s={18} $b={600} $w={11} $ml={6} $mt={3} $c="#687078">0</Text>
  </>
);

const SideNav = () => (
  <Sidebar>
    <SideHeader>
      <Text $s={25} $b={700} $w={153} $ls={0.350} $mt={-3} $c="#16191f">CloudWatch</Text>
      <Slot $ml={128} $mt={7} $c="#545b64"><Cross size={20} w={2.800} /></Slot>
    </SideHeader>
    <Favorites>
      <Text $b={300} $w={206} $ls={0.550} $ml={0.5} $mt={-6}>즐겨찾기 및 최근 항목</Text>
      <Slot $ml={83.5} $c="#545b64"><Triangle dir="right" w={13} h={16} /></Slot>
    </Favorites>
    <SideLink label="대시보드" gap={14} />
    <Section label="경보" gap={10}>
      <Count ml={10} icon={<Warning />} />
      <Count ml={10} icon={<RoundState kind="ok" />} />
      <Count ml={10} icon={<RoundState kind="pending" />} />
    </Section>
    <Section label="로그" gap={16} open />
    <SideLink label="로그 그룹" gap={9} />
    <SideLink label="Logs Insights" gap={10} latin />
    <SideRow $gap={7}>
      <Text $b={300} $w={110} $ls={0.500} $ml={28.5} $mt={-4}>라이브 테일</Text>
      <NewTag $b={300} $w={42} $ls={0.600} $ml={7.500} $mt={-3} $c="#0073bb">신규</NewTag>
    </SideRow>
    <Section label="지표" gap={30} />
    <Section label="X-Ray 기록" gap={15} open ls={-0.3} />
    <SideLink label="서비스 맵" gap={9} active />
    <SideLink label="기록" gap={7} />
    <Section label="이벤트" gap={31} />
    <Section label="애플리케이션 모니터링" gap={15} />
    <Section label="인사이트" gap={16} />
    <SideRule />
    <SideLink label="설정" gap={9} />
    <SideLink label="시작하기" gap={-1} />
  </Sidebar>
);

const Header = () => (
  <PageHeader>
    <Crumbs>
      <CrumbLink $s={20} $w={115} $ls={0.200} $mt={2} $c="#0073bb">CloudWatch</CrumbLink>
      <Slot $ml={17} $mt={3}><Chevron /></Slot>
      <Text $b={600} $w={88} $ls={0.500} $ml={18} $mt={-3} $c="#687078">서비스 맵</Text>
      <Text $s={19} $b={300} $w={192} $ls={0.200} $ml={1025} $mt={2} $c="#687078">마지막 업데이트: 5분 전</Text>
    </Crumbs>
    <TitleRow>
      <Text $s={27} $b={700} $w={114} $ls={1.700} $mt={-3} $c="#16191f">서비스 맵</Text>
      <Ranges>
        <Text $s={20} $w={31} $ls={0.300}>5m</Text>
        <Text $s={20} $w={43} $ls={0.300} $ml={42}>15m</Text>
        <Text $s={20} $w={44} $ls={0.500} $ml={42}>30m</Text>
        <Text $s={20} $w={24} $ml={42}>1h</Text>
        <Text $s={20} $w={24} $ml={43}>3h</Text>
        <Text $s={20} $b={700} $w={26} $ls={0.300} $ml={43} $c="#0073bb">6h</Text>
        <RangeDivider />
        <Text $s={20} $w={74} $ls={0.200} $ml={17}>Custom</Text>
        <Slot $ml={15} $mt={-1} $c="#545b64"><Calendar /></Slot>
      </Ranges>
      <Button $w={71} $ml={15} $r="3px 0 0 3px"><Refresh /></Button>
      <Button $w={62} $ml={-1} $r="0 3px 3px 0"><Triangle dir="down" w={16} h={13} /></Button>
      <Button $w={71} $ml={15}><Expand /></Button>
      <Button $w={155} $ml={15} $tone="active" $r="3px 0 0 3px">
        <Text $b={600} $ls={0.700} $mt={-4} $c="#16191f">맵 보기</Text>
      </Button>
      <Button $w={153} $ml={-1} $r="0 3px 3px 0">
        <Text $b={600} $ls={0.700} $mt={-4}>목록 보기</Text>
      </Button>
    </TitleRow>
  </PageHeader>
);

const ServiceMap = () => (
  <Canvas>
    <MapTools>
      <Field>
        <Slot $c="#687078"><Search size={23} w={2.800} /></Slot>
        <Text $b={300} $w={216} $ls={0.450} $ml={13} $mt={-4} $italic $c="#687078"><Latin>X-Ray </Latin>그룹으로 필터링</Text>
      </Field>
      <Button $w={74} $h={48} $ml={15}><Plus size={22} w={2.400} /></Button>
      <Field $ml={15}>
        <Slot $c="#687078"><Search size={23} w={2.800} /></Slot>
        <Text $b={300} $w={92} $ls={0.900} $ml={14} $mt={-4} $italic $c="#687078">노드 선택</Text>
      </Field>
      <Button $w={154} $h={47} $ml={15} $tone="disabled">
        <Text $b={600} $ls={0.800} $mt={-6} $c="#aab7b8">연결 보기</Text>
      </Button>
      <Button $w={74} $h={47} $ml={15} $r="3px 0 0 3px"><Zoom plus /></Button>
      <DotCell><svg width="12" height="12"><circle cx="6" cy="6" r="6" fill="#aab7b8" /></svg></DotCell>
      <Button $w={74} $h={47} $r="0 3px 3px 0"><Zoom /></Button>
      <Button $w={74} $h={47} $ml={15}><SmallGear /></Button>
    </MapTools>
    <Legend>
      <Slot $c="#545b64"><Triangle dir="right" w={14} h={17} /></Slot>
      <Text $b={600} $ls={0.500} $ml={12} $mt={-5}>범례 및 옵션</Text>
    </Legend>
    <MapEdge width="234" height="16" viewBox="0 0 234 16">
      <path d="M0 8H222" {...stroke(2, "#7b828a")} />
      <path d="M221 .5V15.500L232 8z" fill="#545b64" />
    </MapEdge>
    <MapNode $x={224} $y={226} $d={114}><Person /></MapNode>
    <MapNode $x={599} $y={226} $d={162}><ServiceGear /></MapNode>
    <NodeLabel $x={172} $y={307}>
      <Text $b={300} $ls={0.700} $c="#16191f">클라이언트</Text>
    </NodeLabel>
    <NodeLabel $x={527} $y={316}>
      <svg width="15" height="15" viewBox="0 0 15 15"><circle cx="7.500" cy="7.500" r="6.200" {...stroke(2.400, "#545b64")} /></svg>
      <Text $s={20} $b={600} $ls={0.150} $ml={6} $c="#16191f">sample_xray</Text>
    </NodeLabel>
  </Canvas>
);

const Details = () => (
  <DetailPanel>
    <DetailText>
      <Text $s={27} $b={700} $ls={1.600} $mt={8} $c="#16191f">선택한 노드 없음</Text>
      <Text $b={300} $ls={0.450} $mt={16} $c="#16191f">노드를 선택하여 세부 정보 보기</Text>
    </DetailText>
    <DetailActions>
      <Button $w={183} $h={47} $tone="disabled">
        <Text $b={600} $ls={0.800} $ml={5} $mt={-6} $c="#aab7b8">로그 보기</Text>
        <Slot $ml={13}><External /></Slot>
      </Button>
      <Button $w={153} $h={47} $tone="disabled">
        <Text $b={600} $ls={0.800} $mt={-6} $c="#aab7b8">기록 보기</Text>
      </Button>
      <Button $w={184} $h={47} $tone="disabled">
        <Text $b={600} $ls={0.800} $ml={5} $mt={-6} $c="#aab7b8">기록 분석</Text>
        <Slot $ml={13}><External /></Slot>
      </Button>
      <Button $w={196} $h={47} $tone="disabled">
        <Text $b={600} $ls={0.800} $mt={-6} $c="#aab7b8">대시보드 보기</Text>
      </Button>
    </DetailActions>
  </DetailPanel>
);

const TaskbarRow = () => (
  <Taskbar>
    <WindowsIcon />
    <TaskSearch>
      <Slot $c="#2b2b2b"><Search size={22} w={2.500} /></Slot>
      <Text $s={21} $b={300} $w={42} $ml={16} $c="#505050" lang="ja">検索</Text>
    </TaskSearch>
    <Slot $ml={20}><ChatIcon /></Slot>
    <Slot $ml={31}><ChromeIcon /></Slot>
    <Slot $ml={30}><JetBrainsIcon label="IJ" shards={ideaShards} /></Slot>
    <Slot $ml={30}><JetBrainsIcon label="PC" shards={charmShards} /></Slot>
    <LineCell><LineIcon /></LineCell>
    <Slot $ml={18}><SlackIcon /></Slot>
    <Slot $ml={31}><GitIcon /></Slot>
    <Slot $ml={29}><FolderIcon /></Slot>
    <Slot $ml={31}><NotesIcon /></Slot>
    <Slot $ml={34}><CodeIcon /></Slot>
  </Taskbar>
);

export default function App() {
  return (
    <Desktop>
      <GlobalStyle />
      <Frame>
        <Window>
          <BrowserChrome />
          <NavBar />
          <Body>
            <SideNav />
            <Main>
              <Header />
              <ServiceMap />
              <Details />
            </Main>
          </Body>
        </Window>
      </Frame>
      <TaskbarRow />
    </Desktop>
  );
}
